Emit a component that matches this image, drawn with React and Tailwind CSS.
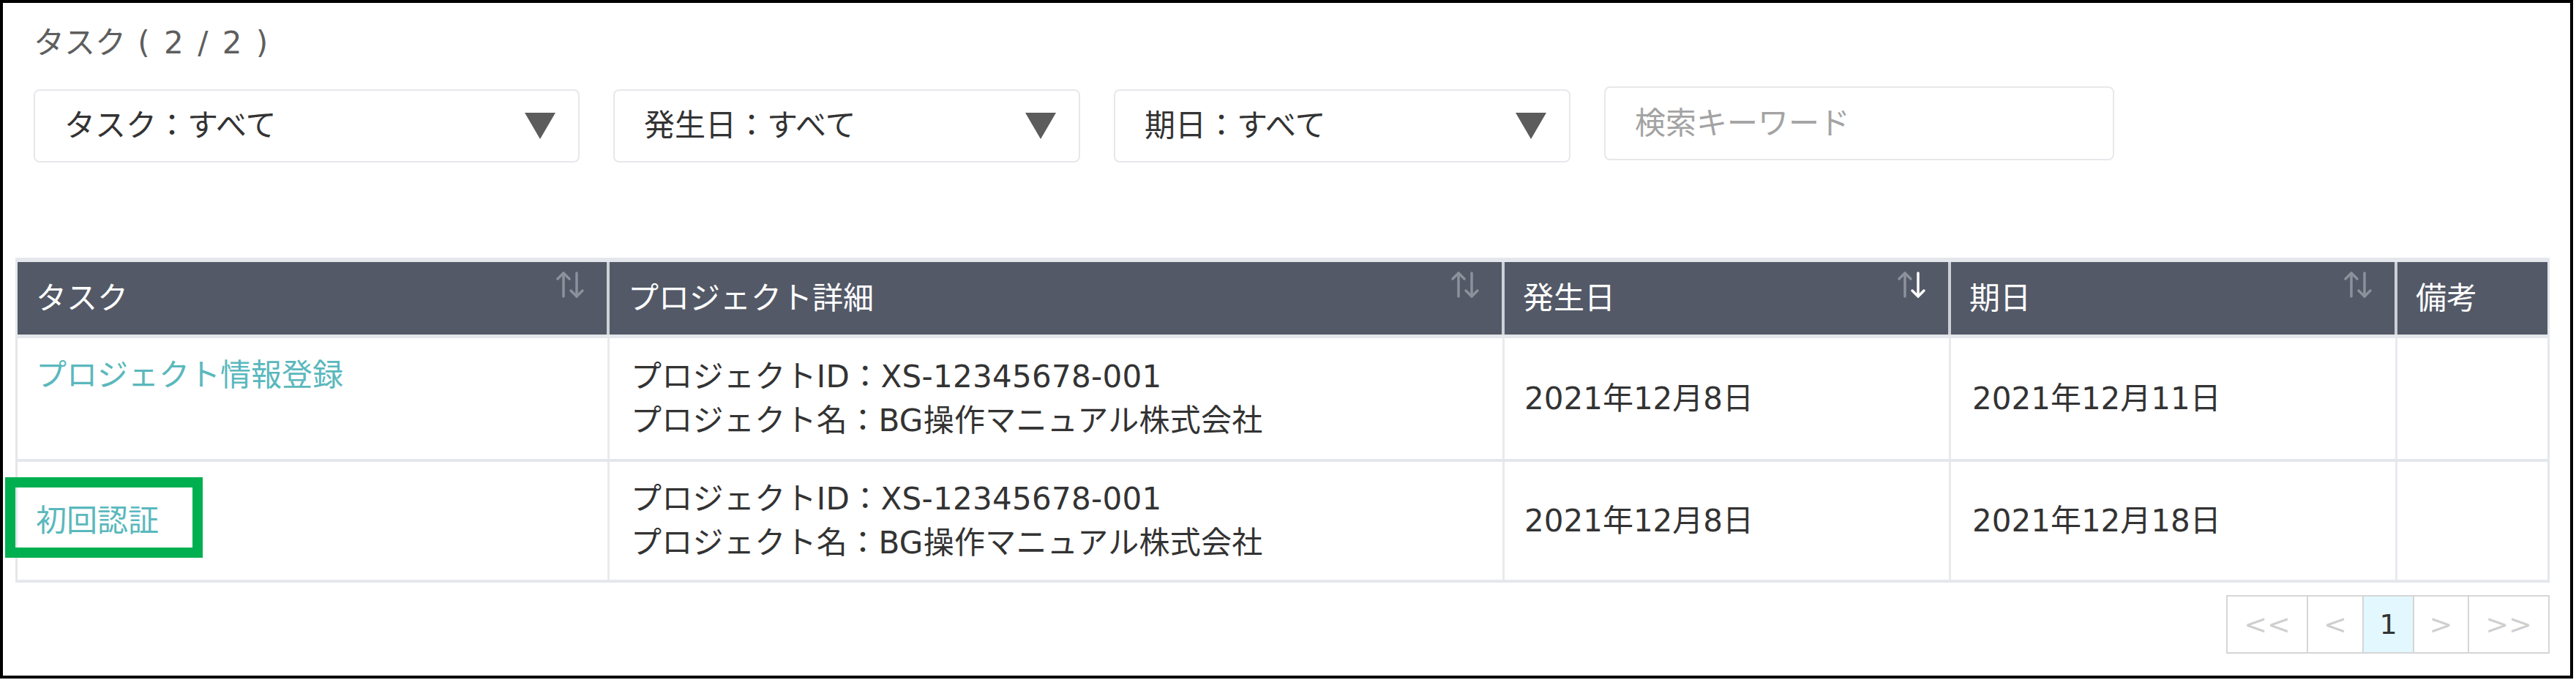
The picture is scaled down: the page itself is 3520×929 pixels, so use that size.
const columns = [
  { label: "タスク", sort: "none" },
  { label: "プロジェクト詳細", sort: "none" },
  { label: "発生日", sort: "desc" },
  { label: "期日", sort: "none" },
  { label: "備考", sort: null },
]

const rows = [
  {
    task: "プロジェクト情報登録",
    taskTop: true,
    projectId: "XS-12345678-001",
    projectName: "BG操作マニュアル株式会社",
    occurred: "2021年12月8日",
    due: "2021年12月11日",
    height: "h-[169px]",
  },
  {
    task: "初回認証",
    taskTop: false,
    projectId: "XS-12345678-001",
    projectName: "BG操作マニュアル株式会社",
    occurred: "2021年12月8日",
    due: "2021年12月18日",
    height: "h-[165px]",
  },
]

const SortIcon = ({ active }) => (
  <svg width="40" height="38" viewBox="0 0 40 38" fill="none" strokeWidth="3.5" strokeLinecap="round" strokeLinejoin="round">
    {/* up arrow */}
    <g stroke="#8c929b">
      <path d="M11 35V3" />
      <path d="M3 11l8-8 8 8" />
    </g>
    {/* down arrow */}
    <g stroke={active ? "#ffffff" : "#8c929b"}>
      <path d="M29 3v32" />
      <path d="M21 27l8 8 8-8" />
    </g>
  </svg>
)

const Caret = () => (
  <svg width="42" height="36" viewBox="0 0 42 36">
    <path d="M0 0h42L21 36z" fill="#5c5c5c" />
  </svg>
)

const Select = ({ label, width }) => (
  <div className={`${width} h-[100px] mt-[4px] flex items-center justify-between pl-[40px] pr-[31px] rounded-[8px] border-2 border-[#e6e8eb] bg-white`}>
    <span className="leading-[60px]">{label}</span>
    <Caret />
  </div>
)

export default function App() {
  return (
    <div className="w-[3516px] h-[927px] border-4 border-black bg-white relative overflow-hidden font-['DejaVu_Sans','Noto_Sans_CJK_JP',sans-serif] text-[42px] text-[#333333]">
      <div className="pl-[42px] pt-[25px] leading-[60px] text-[#5e5e5e]">
        タスク<span className="tracking-[3px]"> ( 2 / 2 )</span>
      </div>

      {/* filters */}
      <div className="flex items-start gap-[46px] pl-[42px] mt-[29px]">
        <Select label="タスク：すべて" width="w-[746px]" />
        <Select label="発生日：すべて" width="w-[638px]" />
        <Select label="期日：すべて" width="w-[624px]" />
        <input
          placeholder="検索キーワード"
          className="w-[697px] h-[101px] pl-[40px] rounded-[8px] border-2 border-[#e6e8eb] bg-white outline-none leading-[60px] placeholder:text-[#a3a3a3]"
        />
      </div>

      {/* table */}
      <div className="ml-[17px] mt-[130px] w-[3463px]">
        <div className="border-x-[3px] border-[#e4e7eb]">
          <div className="grid grid-cols-[809px_1223px_610px_610px_205px] border-t-[6px] border-b-[5px] border-[#e4e7eb] bg-[#535967] h-[110px]">
            {columns.map((c, i) => (
              <div
                key={c.label}
                className={`relative flex items-center pl-[25px] text-white leading-[60px] ${i < columns.length - 1 ? "border-r-[4px] border-[#cdd0d5]" : ""}`}
              >
                {c.label}
                {c.sort && (
                  <div className="absolute right-[30px] top-[12px]">
                    <SortIcon active={c.sort === "desc"} />
                  </div>
                )}
              </div>
            ))}
          </div>

          {rows.map((r) => (
            <div key={r.task} className={`grid grid-cols-[809px_1223px_610px_610px_205px] border-b-4 border-[#e4e7eb] ${r.height}`}>
              <div className={`flex pl-[25px] border-r-[3px] border-[#e8eaee] text-[#5ab8bd] leading-[60px] ${r.taskTop ? "items-start pt-[21px]" : "items-center"}`}>
                {r.task}
              </div>
              <div className="flex flex-col justify-center pl-[29px] border-r-[3px] border-[#e8eaee] leading-[60px] tracking-[0.3px]">
                <div>プロジェクトID：{r.projectId}</div>
                <div>プロジェクト名：{r.projectName}</div>
              </div>
              <div className="flex items-center pl-[27px] border-r-[3px] border-[#e8eaee] leading-[60px]">{r.occurred}</div>
              <div className="flex items-center pl-[29px] border-r-[3px] border-[#e8eaee] leading-[60px]">{r.due}</div>
              <div />
            </div>
          ))}
        </div>

        {/* pagination */}
        <div className="flex justify-end mt-[17px]">
          <div className="flex h-[80px] border-2 border-[#d6d6d6] text-[38px] leading-none">
            <div className="w-[108px] flex items-center justify-center text-[#cfcfcf]">&lt;&lt;</div>
            <div className="w-[76px] flex items-center justify-center border-l-2 border-[#d6d6d6] text-[#cfcfcf]">&lt;</div>
            <div className="w-[69px] flex items-center justify-center border-l-2 border-[#d6d6d6] bg-[#e2f8fe] text-[#333333]">1</div>
            <div className="w-[75px] flex items-center justify-center border-l-2 border-[#d6d6d6] text-[#cfcfcf]">&gt;</div>
            <div className="w-[110px] flex items-center justify-center border-l-2 border-[#d6d6d6] text-[#cfcfcf]">&gt;&gt;</div>
          </div>
        </div>
      </div>

      {/* annotation highlight */}
      <div className="absolute left-[3px] top-[648px] w-[270px] h-[110px] border-[14px] border-[#00b050]" />
    </div>
  )
}
